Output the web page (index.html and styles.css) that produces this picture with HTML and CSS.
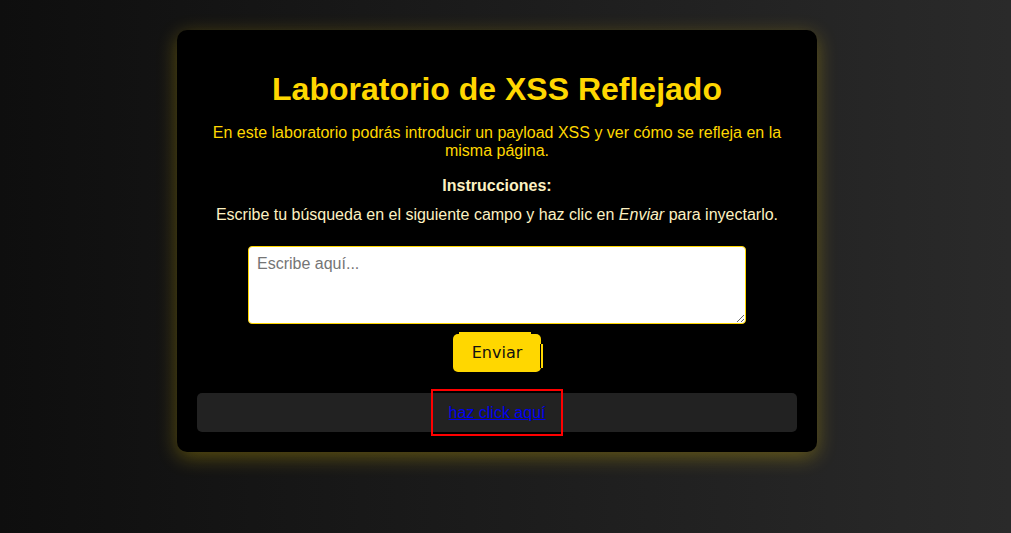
FILE: index.html
```html
<!DOCTYPE html>
<html lang="es">
<head>
<meta charset="utf-8">
<title>Laboratorio de XSS Reflejado</title>
<link rel="stylesheet" href="styles.css">
</head>
<body>
<div class="page">
  <main class="card">
    <h1 class="title">Laboratorio de XSS Reflejado</h1>
    <p class="intro">En este laboratorio podrás introducir un payload XSS y ver cómo se refleja en la misma página.</p>
    <p class="label">Instrucciones:</p>
    <p class="instr">Escribe tu búsqueda en el siguiente campo y haz clic en <em>Enviar</em> para inyectarlo.</p>
    <form class="form">
      <textarea class="field" placeholder="Escribe aquí..."></textarea>
      <button type="button" class="send">Enviar</button>
    </form>
    <div class="result">
      <a class="link" href="#">haz click aquí</a>
    </div>
  </main>
</div>
</body>
</html>
```
FILE: styles.css
```css
html, body {
  margin: 0;
  height: 100%;
}
body {
  background: linear-gradient(to right, #0e0e0e, #2a2a2a);
  font-family: "Liberation Sans", Arial, sans-serif;
  font-size: 16px;
}
.page {
  display: flex;
  justify-content: center;
  padding: 30px 17px 0 0;
}
.card {
  width: 600px;
  padding: 20px;
  background: #000;
  border-radius: 10px;
  box-shadow: 0 5px 20px rgba(255, 215, 0, 0.3);
  text-align: center;
}
.title {
  margin: 21px 0 16px;
  font-size: 32px;
  line-height: 37px;
  font-weight: bold;
  color: #ffd700;
}
.intro {
  margin: 16px 0;
  color: #ffd700;
}
.label {
  margin: 17px 0 0;
  font-weight: bold;
  color: #fdf1c2;
}
.instr {
  margin: 11px 0 0;
  color: #fdf1c2;
}
.form {
  margin-top: 22px;
  display: flex;
  flex-direction: column;
  align-items: center;
}
.field {
  display: block;
  box-sizing: content-box;
  width: 480px;
  height: 60px;
  padding: 8px;
  border: 1px solid #ffd700;
  border-radius: 4px;
  background: #fff;
  font-family: "Liberation Sans", Arial, sans-serif;
  font-size: 16px;
  color: #000;
  margin: 0;
}
.field::placeholder {
  color: #757575;
}
.send {
  position: relative;
  margin-top: 10px;
  width: 88px;
  height: 38px;
  padding: 0;
  border: none;
  border-radius: 5px;
  background: #ffd700;
  color: #111;
  font-family: "DejaVu Sans", sans-serif;
  font-size: 16px;
  line-height: 18px;
}
.send::before {
  content: "";
  position: absolute;
  top: -2px;
  left: 6px;
  width: 72px;
  height: 2px;
  background: #ffd700;
}
.send::after {
  content: "";
  position: absolute;
  top: 10px;
  left: 87px;
  width: 2px;
  height: 24px;
  background: #ffd700;
  border-left: 1px solid #000;
}
.result {
  margin-top: 21px;
  padding: 10px;
  background: #222;
  border-radius: 5px;
  line-height: 19px;
}
.link {
  color: #0000ee;
  text-decoration: underline;
  padding: 13px 16px;
  border: 2px solid #ff0000;
}
```
